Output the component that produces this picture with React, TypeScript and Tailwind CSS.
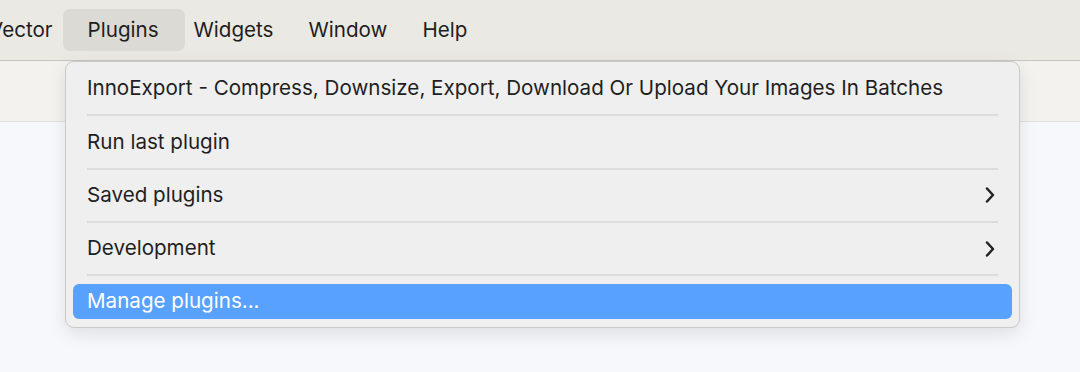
import React from "react";

function Chevron() {
  return (
    <svg width="10" height="16" viewBox="0 0 10 16" fill="none">
      <path d="M2 1.5 L8 8 L2 14.5" stroke="#222" strokeWidth="2.5" strokeLinecap="round" strokeLinejoin="round" />
    </svg>
  );
}

const Sep = () => <div className="mx-[14px] h-[2px] bg-[#dcdcdc]" />;

function Row({ label, sub }: { label: string; sub?: boolean }) {
  return (
    <div className="flex h-[51.3px] items-center justify-between px-[14px] text-[20.6px] text-[#1f1f1f]">
      <span>{label}</span>
      {sub && <span className="mr-[3px] flex items-center"><Chevron /></span>}
    </div>
  );
}

export default function App() {
  return (
    <div
      className="relative h-[372px] w-[1080px] overflow-hidden bg-[#f6f8fb]"
      style={{ fontFamily: "Inter, 'Noto Sans', sans-serif" }}
    >
      <div className="flex h-[61px] items-center gap-[35px] border-b border-[#c8c6c1] bg-[#ebe9e3] text-[20.6px] text-[#1e1e1e]">
        <span className="-ml-[11px]">Vector</span>
        <span className="relative">
          <span className="absolute -left-[25px] -right-[26px] -top-[6px] -bottom-[6px] rounded-[7px] bg-[#dcdad4]" />
          <span className="relative">Plugins</span>
        </span>
        <span>Widgets</span>
        <span>Window</span>
        <span>Help</span>
      </div>
      <div className="h-[61px] border-b border-[#e2e1de] bg-[#f3f2ef]" />

      <div className="absolute left-[65px] top-[61px] w-[955px] rounded-[9px] border border-[#c9c9c9] bg-[#efefef] px-[7px] pb-[8px] pt-[1px] shadow-[0_6px_18px_rgba(0,0,0,0.10)]">
        <Row label="InnoExport - Compress, Downsize, Export, Download Or Upload Your Images In Batches" />
        <Sep />
        <Row label="Run last plugin" />
        <Sep />
        <Row label="Saved plugins" sub />
        <Sep />
        <Row label="Development" sub />
        <Sep />
        <div className="mt-[8px] flex h-[35px] items-center rounded-[6px] bg-[#58a1fd] px-[14px] text-[20.6px] text-white">
          Manage plugins...
        </div>
      </div>
    </div>
  );
}
